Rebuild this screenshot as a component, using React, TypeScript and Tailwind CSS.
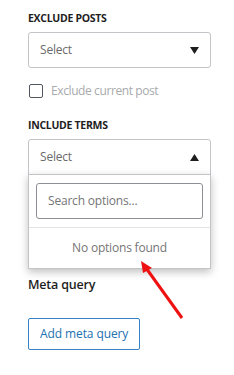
import React from 'react';

const Caret = ({ up }: { up?: boolean }) => (
  <svg width="9" height="7" viewBox="0 0 9 7" className="shrink-0">
    {up ? <polygon points="0,7 9,7 4.5,0" fill="#1e1e1e" /> : <polygon points="0,0 9,0 4.5,7" fill="#1e1e1e" />}
  </svg>
);

const App = () => {
  return (
    <div className="relative w-[234px] h-[375px] bg-white pl-[28px] pr-[23px] pt-[11px] font-['Open_Sans',sans-serif]">
      <div className="text-[10.5px] leading-[15px] font-bold uppercase tracking-[-0.3px] text-[#1e1e1e]">Exclude posts</div>
      <div className="mt-[6px] h-[36px] flex items-center justify-between border border-[#c3c4c7] rounded-[3px] pl-[11px] pr-[11px]">
        <span className="text-[12px] tracking-[-0.2px] text-[#6b6b6b]">Select</span>
        <Caret />
      </div>

      <div className="mt-[16px] flex items-center gap-[8px] h-[14px] pl-[1px]">
        <div className="w-[14px] h-[14px] border border-[#50575e] rounded-[2px]" />
        <span className="text-[12px] tracking-[-0.4px] text-[#a7aaad]">Exclude current post</span>
      </div>

      <div className="mt-[20px] text-[10.5px] leading-[15px] font-bold uppercase tracking-[-0.3px] text-[#1e1e1e]">Include terms</div>
      <div className="relative mt-[6px]">
        <div className="h-[36px] flex items-center justify-between border border-[#c3c4c7] rounded-t-[3px] pl-[11px] pr-[11px]">
          <span className="text-[12px] tracking-[-0.2px] text-[#6b6b6b]">Select</span>
          <Caret up />
        </div>
        <div className="absolute left-0 right-0 top-[35px] bg-white border border-[#c3c4c7] shadow-[0_3px_8px_rgba(0,0,0,0.25)]">
          <div className="px-[7px] pt-[8px] pb-[8px]">
            <div className="h-[36px] flex items-center border border-[#8c8f94] rounded-[3px] pl-[11px]">
              <span className="text-[12px] tracking-[-0.2px] text-[#757575]">Search options...</span>
            </div>
          </div>
          <div className="border-t border-[#e4e4e4] h-[41px] flex items-center justify-center">
            <span className="text-[12px] tracking-[-0.2px] text-[#757575]">No options found</span>
          </div>
        </div>
      </div>

      <div className="mt-[101px] text-[12.5px] leading-[18px] font-semibold tracking-[-0.2px] text-[#1e1e1e]">Meta query</div>
      <button className="mt-[24px] h-[32px] px-[11px] border border-[#3582c4] rounded-[2px] text-[12px] tracking-[-0.1px] text-[#2271b1] bg-white">
        Add meta query
      </button>

      <svg className="absolute left-0 top-0 pointer-events-none" width="234" height="375">
        <line x1="182" y1="318" x2="146" y2="268" stroke="#ee1111" strokeWidth="3" />
        <polygon points="141,261 152,268 143,273" fill="#ee1111" />
      </svg>
    </div>
  );
};

export default App;
